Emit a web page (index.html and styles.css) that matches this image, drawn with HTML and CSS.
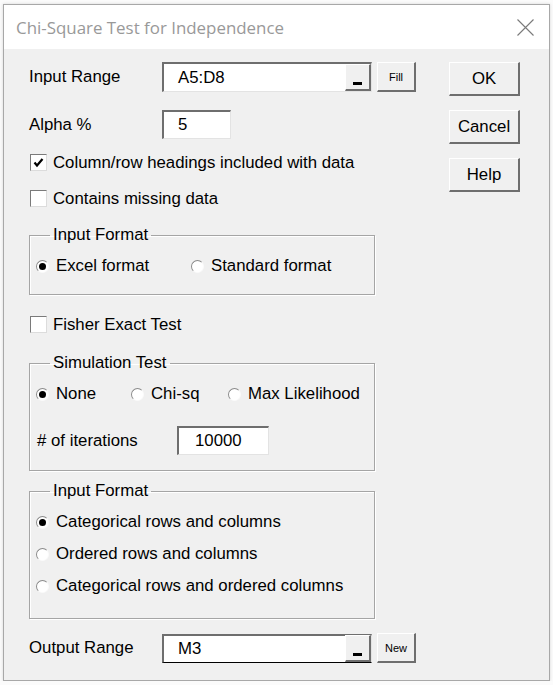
FILE: index.html
```html
<!DOCTYPE html>
<html>
<head>
    <title>Chi-Square Test for Independence</title>
    <link rel="stylesheet" href="styles.css">
</head>
<body>
  <div class="window">
    <div class="titlebar">
      <span class="title">Chi-Square Test for Independence</span>
      <svg class="close" width="17" height="17" viewBox="0 0 17 17">
        <path d="M0.5 0.5 L16.5 16.5 M16.5 0.5 L0.5 16.5" stroke="#7a7a7a" stroke-width="1.1" fill="none"/>
      </svg>
    </div>

    <div class="content">
      <div class="left">
        <!-- input range -->
        <div class="row range-row">
          <span class="label">Input Range</span>
          <div class="textbox range-box">
            <span class="value">A5:D8</span>
            <span class="pick"><i class="dash"></i></span>
          </div>
          <button class="small-btn">Fill</button>
        </div>

        <div class="row alpha-row">
          <span class="label">Alpha %</span>
          <div class="textbox alpha-box"><span class="value">5</span></div>
        </div>

        <div class="row check-row check1">
          <span class="checkbox">
            <svg width="13" height="13" viewBox="0 0 13 13"><path d="M2.5 6.5 L5 9.5 L10.5 3" stroke="#000" stroke-width="2.2" fill="none"/></svg>
          </span>
          <span>Column/row headings included with data</span>
        </div>

        <div class="row check-row check2">
          <span class="checkbox"></span>
          <span>Contains missing data</span>
        </div>

        <fieldset class="frame frame1">
          <legend>Input Format</legend>
          <div class="radio-line">
            <label class="opt w155"><span class="radio on"></span>Excel format</label>
            <label class="opt"><span class="radio"></span>Standard format</label>
          </div>
        </fieldset>

        <div class="row check-row check3">
          <span class="checkbox"></span>
          <span>Fisher Exact Test</span>
        </div>

        <fieldset class="frame frame2">
          <legend>Simulation Test</legend>
          <div class="radio-line">
            <label class="opt w95"><span class="radio on"></span>None</label>
            <label class="opt w97"><span class="radio"></span>Chi-sq</label>
            <label class="opt"><span class="radio"></span>Max Likelihood</label>
          </div>
          <div class="iter-row">
            <span class="iter-label"># of iterations</span>
            <div class="textbox iter-box"><span class="value">10000</span></div>
          </div>
        </fieldset>

        <fieldset class="frame frame3">
          <legend>Input Format</legend>
          <div class="radio-line">
            <label class="opt"><span class="radio on"></span>Categorical rows and columns</label>
          </div>
          <div class="radio-line next">
            <label class="opt"><span class="radio"></span>Ordered rows and columns</label>
          </div>
          <div class="radio-line next">
            <label class="opt"><span class="radio"></span>Categorical rows and ordered columns</label>
          </div>
        </fieldset>

        <div class="row output-row">
          <span class="label">Output Range</span>
          <div class="textbox range-box out-box">
            <span class="value">M3</span>
            <span class="pick"><i class="dash"></i></span>
          </div>
          <button class="small-btn">New</button>
        </div>
      </div>

      <div class="right">
        <button class="btn">OK</button>
        <button class="btn">Cancel</button>
        <button class="btn">Help</button>
      </div>
    </div>
  </div>
</body>
</html>
```

FILE: styles.css
```css
body {
    margin: 0;
    background: #fbfbfb;
    font-family: "Liberation Sans", Arial, sans-serif;
    font-size: 16.8px;
    color: #000;
}
.window {
    margin: 4px 0 0 3px;
    width: 547px;
    height: 677px;
    box-sizing: border-box;
    border: 1px solid #a8a8a8;
    background: #f0f0f0;
    box-shadow: 0 0 3px rgba(0,0,0,0.15);
}
.titlebar {
    height: 44px;
    background: #fff;
    display: flex;
    align-items: center;
    justify-content: space-between;
    padding: 0 15px 0 12px;
}
.title {
    font-family: "Open Sans", sans-serif;
    font-size: 16.9px;
    color: #999;
}
.close {
    margin-top: 1px;
}
.content {
    display: flex;
    padding: 13px 0 0 25px;
}
.left {
    width: 387px;
}
.right {
    margin-left: 33px;
    display: flex;
    flex-direction: column;
}
.row {
    display: flex;
    align-items: center;
}
.label {
    width: 133px;
}
.textbox {
    box-sizing: border-box;
    background: #fff;
    border-top: 2px solid #6e6e6e;
    border-left: 2px solid #6e6e6e;
    border-right: 1px solid #e3e3e3;
    border-bottom: 1px solid #e3e3e3;
    display: flex;
    align-items: center;
}
.value {
    padding-left: 14px;
    flex: 1;
}
.range-row {
    height: 30px;
}
.range-box {
    width: 210px;
    height: 30px;
}
.pick {
    width: 26px;
    height: 27px;
    box-sizing: border-box;
    background: #f0f0f0;
    border-top: 1px solid #fff;
    border-left: 1px solid #fff;
    border-right: 2px solid #6e6e6e;
    border-bottom: 2px solid #6e6e6e;
    display: flex;
    justify-content: center;
    align-items: flex-end;
    padding-bottom: 4px;
}
.dash {
    display: block;
    width: 9px;
    height: 3px;
    background: #000;
}
.small-btn {
    margin-left: 5px;
    width: 39px;
    height: 30px;
    box-sizing: border-box;
    background: #f0f0f0;
    border-top: 1px solid #fff;
    border-left: 1px solid #fff;
    border-right: 2px solid #6e6e6e;
    border-bottom: 2px solid #6e6e6e;
    font-family: "Liberation Sans", Arial, sans-serif;
    font-size: 11px;
    padding: 0;
    color: #000;
}
.alpha-row {
    margin-top: 18px;
    height: 29px;
}
.alpha-box {
    width: 69px;
    height: 29px;
}
.check-row {
    height: 17px;
}
.check1 {
    margin-top: 15px;
}
.check2 {
    margin-top: 19px;
}
.check3 {
    margin-top: 21px;
}
.checkbox {
    width: 17px;
    height: 17px;
    box-sizing: border-box;
    margin: 0 6px 0 1px;
    background: #fff;
    border-top: 1px solid #7a7a7a;
    border-left: 1px solid #7a7a7a;
    border-right: 1px solid #dcdcdc;
    border-bottom: 1px solid #dcdcdc;
    display: flex;
    align-items: center;
    justify-content: center;
}
.frame {
    margin: 0;
    padding: 0 0 0 6px;
    width: 346px;
    box-sizing: border-box;
    border: 1px solid #a5a5a5;
    box-shadow: 1px 1px 0 #fff, inset 1px 1px 0 #fff;
}
.frame legend {
    margin-left: 14px;
    padding: 0 3px;
    line-height: 20px;
}
.frame1 {
    margin-top: 18px;
    height: 70px;
}
.frame2 {
    margin-top: 20px;
    height: 118px;
}
.frame3 {
    margin-top: 10px;
    height: 138px;
}
.radio-line {
    display: flex;
    align-items: center;
    height: 20px;
    margin-top: 11px;
}
.radio-line.next {
    margin-top: 12px;
}
.opt {
    display: flex;
    align-items: center;
}
.w155 { width: 155px; }
.w95 { width: 95px; }
.w97 { width: 97px; }
.radio {
    width: 13px;
    height: 13px;
    box-sizing: border-box;
    border-radius: 50%;
    background: #fff;
    border-top: 1px solid #8a8a8a;
    border-left: 1px solid #8a8a8a;
    border-right: 1px solid #fafafa;
    border-bottom: 1px solid #fafafa;
    margin-right: 7px;
    display: flex;
    align-items: center;
    justify-content: center;
}
.radio.on::after {
    content: "";
    width: 7px;
    height: 7px;
    border-radius: 50%;
    background: #000;
}
.iter-row {
    display: flex;
    align-items: center;
    margin-top: 22px;
    height: 29px;
}
.iter-label {
    width: 140px;
    padding-left: 1px;
}
.iter-box {
    width: 92px;
    height: 29px;
}
.iter-box .value {
    padding-left: 16px;
}
.output-row {
    margin-top: 14px;
    height: 30px;
}
.out-box {
    height: 29px;
    border-bottom: 1px solid #000;
}
.btn {
    width: 71px;
    height: 34px;
    margin-bottom: 14px;
    box-sizing: border-box;
    background: #f0f0f0;
    border-top: 1px solid #fff;
    border-left: 1px solid #fff;
    border-right: 2px solid #6e6e6e;
    border-bottom: 2px solid #6e6e6e;
    font-family: "Liberation Sans", Arial, sans-serif;
    font-size: 16.8px;
    color: #000;
    padding: 0;
}
```
